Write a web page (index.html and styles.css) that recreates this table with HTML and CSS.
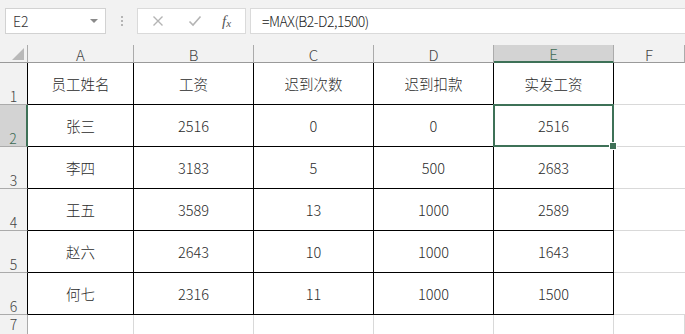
FILE: index.html
```html
<!DOCTYPE html>
<html lang="zh-CN">
<head>
<meta charset="utf-8">
<title>Sheet</title>
<link rel="stylesheet" href="styles.css">
</head>
<body>
<div class="app">
  <div class="toolbar">
    <div class="namebox">
      <span class="name">E2</span>
      <span class="caret"></span>
    </div>
    <div class="dots"><i></i><i></i><i></i></div>
    <div class="fbtns">
      <svg class="ico" width="12" height="12" viewBox="0 0 12 12"><path d="M1.5 1.5 L10.5 10.5 M10.5 1.5 L1.5 10.5" stroke="#b4b4b4" stroke-width="1.4" fill="none"/></svg>
      <svg class="ico" width="14" height="12" viewBox="0 0 14 12"><path d="M1.5 6.5 L5 10 L12.5 1.5" stroke="#b4b4b4" stroke-width="1.6" fill="none"/></svg>
      <span class="fx">f<sub>x</sub></span>
    </div>
    <div class="finput">=MAX(B2-D2,1500)</div>
  </div>
  <div class="sheet">
    <div class="corner"><span class="tri"></span></div>
    <div class="ch">A</div>
    <div class="ch">B</div>
    <div class="ch">C</div>
    <div class="ch">D</div>
    <div class="ch sel">E</div>
    <div class="ch">F</div>

    <div class="rh">1</div>
    <div class="c">员工姓名</div>
    <div class="c">工资</div>
    <div class="c">迟到次数</div>
    <div class="c">迟到扣款</div>
    <div class="c">实发工资</div>
    <div class="g"></div>

    <div class="rh sel">2</div>
    <div class="c">张三</div>
    <div class="c">2516</div>
    <div class="c">0</div>
    <div class="c">0</div>
    <div class="c active">2516</div>
    <div class="g"></div>

    <div class="rh">3</div>
    <div class="c">李四</div>
    <div class="c">3183</div>
    <div class="c">5</div>
    <div class="c">500</div>
    <div class="c">2683</div>
    <div class="g"></div>

    <div class="rh">4</div>
    <div class="c">王五</div>
    <div class="c">3589</div>
    <div class="c">13</div>
    <div class="c">1000</div>
    <div class="c">2589</div>
    <div class="g"></div>

    <div class="rh">5</div>
    <div class="c">赵六</div>
    <div class="c">2643</div>
    <div class="c">10</div>
    <div class="c">1000</div>
    <div class="c">1643</div>
    <div class="g"></div>

    <div class="rh">6</div>
    <div class="c">何七</div>
    <div class="c">2316</div>
    <div class="c">11</div>
    <div class="c">1000</div>
    <div class="c">1500</div>
    <div class="g"></div>

    <div class="rh last">7</div>
    <div class="e"></div>
    <div class="e"></div>
    <div class="e"></div>
    <div class="e"></div>
    <div class="e"></div>
    <div class="e"></div>
  </div>
</div>
</body>
</html>
```

FILE: styles.css
```css
* { box-sizing: border-box; }
html, body { margin: 0; padding: 0; }
body {
  width: 685px;
  height: 334px;
  overflow: hidden;
  background: #ffffff;
  font-family: "Noto Sans CJK SC", "Noto Sans", sans-serif;
  color: #2b2b2b;
}
.app { width: 685px; height: 334px; display: flex; flex-direction: column; }

.toolbar {
  height: 45px;
  background: #f2f2f2;
  display: flex;
  align-items: flex-start;
  padding-top: 8px;
  padding-left: 5px;
}
.namebox {
  width: 101px;
  height: 26px;
  background: #fff;
  border: 1px solid #d2d2d2;
  display: flex;
  align-items: center;
  justify-content: space-between;
  padding: 0 7px 0 7px;
}
.name {
  font-family: "Noto Sans CJK SC", "Noto Sans", sans-serif;
  font-weight: 300;
  font-size: 14px;
  color: #333;
}
.caret {
  width: 0; height: 0;
  border-left: 4px solid transparent;
  border-right: 4px solid transparent;
  border-top: 4px solid #8a8a8a;
}
.dots {
  width: 31px;
  height: 26px;
  display: flex;
  flex-direction: column;
  align-items: center;
  justify-content: center;
  gap: 2px;
}
.dots i { display: block; width: 2px; height: 2px; background: #b5b5b5; }
.fbtns {
  width: 109px;
  height: 26px;
  background: #fff;
  border: 1px solid #dadada;
  display: flex;
  align-items: center;
  padding-left: 14px;
}
.fbtns .ico:first-child { margin-right: 24px; }
.fbtns .ico:nth-child(2) { margin-right: 20px; }
.fx {
  font-family: "Liberation Serif", serif;
  font-style: italic;
  font-size: 15px;
  color: #555;
  line-height: 1;
}
.fx sub { font-size: 11px; vertical-align: -1px; }
.finput {
  flex: 1;
  height: 26px;
  margin-left: 4px;
  background: #fff;
  border: 1px solid #dadada;
  border-right: none;
  font-family: "Noto Sans CJK SC", "Noto Sans", sans-serif;
  font-weight: 300;
  font-size: 14px;
  letter-spacing: -0.5px;
  color: #222;
  display: flex;
  align-items: center;
  padding-left: 11px;
}

.sheet {
  display: grid;
  grid-template-columns: 28px 106px 120px 120px 120px 120px 71px;
  grid-template-rows: 18px repeat(6, 42px) 1fr;
  flex: 1;
  background: #fff;
}
.corner {
  background: #f2f2f2;
  border-right: 1px solid #ababab;
  border-bottom: 1px solid #9a9a9a;
  position: relative;
}
.tri {
  position: absolute;
  right: 3px;
  bottom: 2px;
  width: 0; height: 0;
  border-left: 12px solid transparent;
  border-bottom: 12px solid #b9b9b9;
}
.ch {
  background: #f2f2f2;
  border-right: 1px solid #ababab;
  border-bottom: 1px solid #9a9a9a;
  font-family: "Noto Sans CJK SC", "Noto Sans", sans-serif;
  font-weight: 300;
  font-size: 15px;
  color: #444;
  display: flex;
  align-items: center;
  justify-content: center;
  line-height: 1;
  padding-top: 1px;
}
.ch.sel {
  background: #d3d3d3;
  border-bottom: 2px solid #3e7157;
  color: #3e6b55;
}
.rh {
  background: #f2f2f2;
  border-right: 1px solid #000;
  border-bottom: 1px solid #ababab;
  font-family: "Noto Sans CJK SC", "Noto Sans", sans-serif;
  font-weight: 300;
  font-size: 14px;
  color: #444;
  display: flex;
  align-items: flex-end;
  justify-content: center;
  padding-bottom: 2px;
  line-height: 12px;
}
.rh.sel {
  background: #d3d3d3;
  border-right: 2px solid #3e7157;
  color: #3e6b55;
}
.rh.last {
  border-right: 1px solid #ababab;
  border-bottom: none;
  align-items: flex-start;
  padding-top: 3px;
  padding-bottom: 0;
}
.c {
  border-right: 1px solid #000;
  border-bottom: 1px solid #000;
  display: flex;
  align-items: center;
  justify-content: center;
  font-size: 14.5px;
  font-weight: 300;
  color: #2b2b2b;
}
.c.active { position: relative; }
.c.active::after {
  content: "";
  position: absolute;
  top: -1px; left: -1px; right: -1px; bottom: -1px;
  border: 2px solid #3e7157;
}
.c.active::before {
  content: "";
  position: absolute;
  right: -4px;
  bottom: -4px;
  width: 6px;
  height: 6px;
  background: #3e7157;
  border: 1px solid #fff;
  z-index: 2;
}
.g { border-bottom: 1px solid #d9d9d9; }
.e { border-right: 1px solid #d9d9d9; }
```
